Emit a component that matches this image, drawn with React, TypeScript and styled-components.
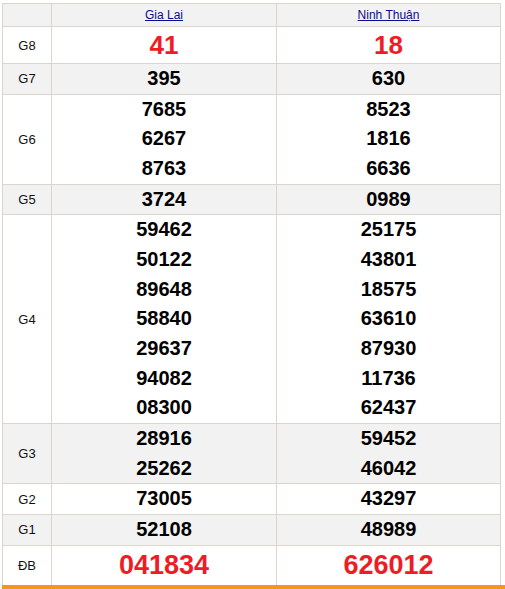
import React from "react";
import styled, { createGlobalStyle } from "styled-components";

const Global = createGlobalStyle`
  html, body { margin: 0; padding: 0; background: #fff; }
  body { font-family: "Liberation Sans", Arial, sans-serif; }
`;

const Page = styled.div`
  padding-top: 3px;
  padding-left: 2px;
`;

const Frame = styled.div`
  border-bottom: 4px solid #f7941d;
`;

const Table = styled.div`
  width: 499px;
  border-left: 1px solid #ddd5cc;
  border-top: 1px solid #ddd5cc;
  box-sizing: border-box;
`;

const Row = styled.div<{ $alt?: boolean; $last?: boolean }>`
  display: grid;
  grid-template-columns: 49px 225px 224px;
  background: ${(p) => (p.$alt ? "#f2f2f2" : "#fff")};
  & > div {
    border-right: 1px solid #ddd5cc;
    border-bottom: ${(p) => (p.$last ? "none" : "1px solid #ddd5cc")};
  }
`;

const LabelCell = styled.div`
  display: flex;
  align-items: center;
  justify-content: center;
  font-size: 13px;
  color: #111;
`;

const HeadCell = styled.div`
  height: 22px;
  display: flex;
  align-items: center;
  justify-content: center;
`;

const ProvinceLink = styled.a`
  font-size: 12px;
  color: #0c0c8c;
  text-decoration: underline;
`;

const NumCell = styled.div`
  display: flex;
  flex-direction: column;
  align-items: center;
  justify-content: center;
`;

const Num = styled.div<{ $size: "normal" | "g8" | "db" }>`
  font-weight: bold;
  text-align: center;
  color: ${(p) => (p.$size === "normal" ? "#000" : "#ee1c25")};
  font-size: ${(p) => (p.$size === "normal" ? "20px" : p.$size === "g8" ? "26px" : "27px")};
  line-height: ${(p) => (p.$size === "normal" ? "29.67px" : p.$size === "g8" ? "36px" : "39px")};
`;

type Prize = {
  label: string;
  a: string[];
  b: string[];
  size: "normal" | "g8" | "db";
};

const prizes: Prize[] = [
  { label: "G8", a: ["41"], b: ["18"], size: "g8" },
  { label: "G7", a: ["395"], b: ["630"], size: "normal" },
  { label: "G6", a: ["7685", "6267", "8763"], b: ["8523", "1816", "6636"], size: "normal" },
  { label: "G5", a: ["3724"], b: ["0989"], size: "normal" },
  {
    label: "G4",
    a: ["59462", "50122", "89648", "58840", "29637", "94082", "08300"],
    b: ["25175", "43801", "18575", "63610", "87930", "11736", "62437"],
    size: "normal",
  },
  { label: "G3", a: ["28916", "25262"], b: ["59452", "46042"], size: "normal" },
  { label: "G2", a: ["73005"], b: ["43297"], size: "normal" },
  { label: "G1", a: ["52108"], b: ["48989"], size: "normal" },
  { label: "ĐB", a: ["041834"], b: ["626012"], size: "db" },
];

export default function App() {
  return (
    <>
      <Global />
      <Page>
        <Frame>
          <Table>
            <Row $alt>
              <HeadCell />
              <HeadCell>
                <ProvinceLink href="#">Gia Lai</ProvinceLink>
              </HeadCell>
              <HeadCell>
                <ProvinceLink href="#">Ninh Thuận</ProvinceLink>
              </HeadCell>
            </Row>
            {prizes.map((p, i) => (
              <Row key={p.label} $alt={i % 2 === 1} $last={i === prizes.length - 1}>
                <LabelCell>{p.label}</LabelCell>
                <NumCell>
                  {p.a.map((n, j) => (
                    <Num key={j} $size={p.size}>
                      {n}
                    </Num>
                  ))}
                </NumCell>
                <NumCell>
                  {p.b.map((n, j) => (
                    <Num key={j} $size={p.size}>
                      {n}
                    </Num>
                  ))}
                </NumCell>
              </Row>
            ))}
          </Table>
        </Frame>
      </Page>
    </>
  );
}
